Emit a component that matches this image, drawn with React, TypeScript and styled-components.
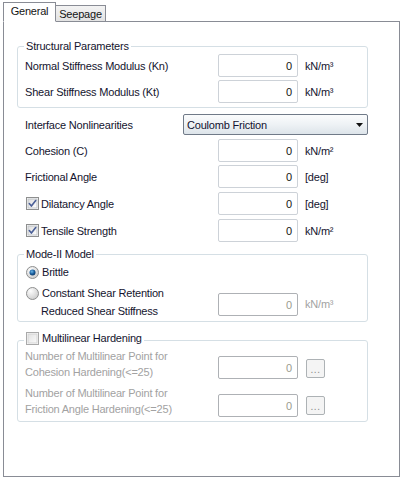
import React from "react";
import styled, { createGlobalStyle, css } from "styled-components";

const Global = createGlobalStyle`
  html, body { margin: 0; padding: 0; background: #ffffff; }
  body { font-family: "Liberation Sans", Arial, sans-serif; font-size: 11px; letter-spacing: -0.2px; color: #14142e; }
  * { box-sizing: border-box; }
`;

const Page = styled.div`
  width: 405px;
  height: 482px;
  padding: 2px 0 0 3px;
  display: flex;
  flex-direction: column;
`;

const TabStrip = styled.div`
  display: flex;
  align-items: flex-end;
  height: 20px;
  margin-bottom: -1px;
  position: relative;
  z-index: 1;
`;

const Tab = styled.div<{ $active?: boolean }>`
  display: flex;
  align-items: center;
  justify-content: center;
  border: 1px solid #898c95;
  color: #141414;
  ${(p) =>
    p.$active
      ? css`
          width: 53px;
          height: 20px;
          background: #ffffff;
          border-bottom: 1px solid #ffffff;
          position: relative;
          z-index: 2;
          padding-bottom: 2px;
        `
      : css`
          width: 51px;
          height: 17px;
          margin-left: -1px;
          background: linear-gradient(#f3f3f3, #e3e3e3);
          padding-top: 1px;
        `}
`;

const Panel = styled.div`
  width: 397px;
  height: 456px;
  border: 1px solid #898c95;
  background: #ffffff;
  padding: 24px 0 0 13px;
  display: flex;
  flex-direction: column;
`;

const Group = styled.div<{ $pad: string; $mt?: number }>`
  position: relative;
  width: 351px;
  border: 1px solid #d5dfe5;
  border-radius: 3px;
  padding: ${(p) => p.$pad};
  margin-top: ${(p) => p.$mt ?? 0}px;
  display: flex;
  flex-direction: column;
`;

const Legend = styled.div<{ $top?: number }>`
  position: absolute;
  top: ${(p) => p.$top ?? -8}px;
  left: 6px;
  line-height: 14px;
  padding: 0 2px;
  background: #ffffff;
  display: flex;
  align-items: center;
  gap: 2px;
`;

const Row = styled.div<{ $mt?: number; $pl?: number; $h?: number }>`
  display: flex;
  align-items: center;
  height: ${(p) => p.$h ?? 23}px;
  margin-top: ${(p) => p.$mt ?? 0}px;
  padding-left: ${(p) => p.$pl ?? 0}px;
`;

const Label = styled.div<{ $w?: number; $disabled?: boolean }>`
  width: ${(p) => p.$w ?? 193}px;
  flex: none;
  display: flex;
  align-items: center;
  gap: 2px;
  white-space: nowrap;
  color: ${(p) => (p.$disabled ? "#a2a2a2" : "#14142e")};
`;

const CheckSlot = styled.span`
  display: flex;
  margin-left: 1px;
`;

const Input = styled.div<{ $disabled?: boolean; $mt?: number }>`
  width: 80px;
  height: 23px;
  flex: none;
  margin-top: ${(p) => p.$mt ?? 0}px;
  border: 1px solid ${(p) => (p.$disabled ? "#aeb1b5" : "#cdd2d8")};
  border-radius: 2px;
  background: #ffffff;
  display: flex;
  align-items: center;
  justify-content: flex-end;
  padding-right: 5px;
  color: ${(p) => (p.$disabled ? "#9b9b8f" : "#141414")};
`;

const Unit = styled.div<{ $disabled?: boolean; $mt?: number }>`
  margin-left: 7px;
  margin-top: ${(p) => p.$mt ?? 0}px;
  color: ${(p) => (p.$disabled ? "#a2a2a2" : "#14142e")};
  white-space: nowrap;
`;

const Combo = styled.div`
  width: 185px;
  height: 21px;
  border: 1px solid #707a88;
  border-radius: 2px;
  background: linear-gradient(#fbfcfd 0%, #eef2f5 50%, #dde4ea 100%);
  display: flex;
  align-items: center;
  justify-content: space-between;
  padding: 0 4px 0 3px;
  color: #121230;
`;

const SubRow = styled.div<{ $mt?: number }>`
  display: flex;
  align-items: flex-start;
  margin-top: ${(p) => p.$mt ?? 0}px;
`;

const Column = styled.div<{ $w?: number }>`
  width: ${(p) => p.$w ?? 193}px;
  flex: none;
  display: flex;
  flex-direction: column;
`;

const OptionRow = styled.div<{ $mt?: number }>`
  display: flex;
  align-items: center;
  gap: 3px;
  height: 16px;
  margin-top: ${(p) => p.$mt ?? 0}px;
  margin-left: 1px;
  white-space: nowrap;
`;

const Indented = styled.div<{ $mt?: number }>`
  margin-left: 16px;
  margin-top: ${(p) => p.$mt ?? 0}px;
  line-height: 16px;
  white-space: nowrap;
`;

const Multiline = styled.div`
  width: 193px;
  flex: none;
  line-height: 16px;
  color: #a2a2a2;
`;

const DotsButton = styled.div<{ $mt?: number }>`
  width: 19px;
  height: 19px;
  margin-left: 8px;
  margin-top: ${(p) => p.$mt ?? 0}px;
  border: 1px solid #adb2b5;
  border-radius: 2px;
  background: #f4f4f4;
  color: #8a8a8a;
  display: flex;
  align-items: center;
  justify-content: center;
  font-size: 10px;
  padding-top: 2px;
  letter-spacing: 0.5px;
`;

const CheckBox = ({ checked, disabled }: { checked?: boolean; disabled?: boolean }) => {
  const id = `cb${checked ? 1 : 0}${disabled ? 1 : 0}`;
  return (
    <svg width="13" height="13" viewBox="0 0 13 13" style={{ flex: "none" }}>
      <defs>
        <linearGradient id={id} x1="0" y1="0" x2="1" y2="1">
          <stop offset="0" stopColor={disabled ? "#e2e2e2" : "#dcdcdc"} />
          <stop offset="1" stopColor={disabled ? "#fafafa" : "#ffffff"} />
        </linearGradient>
      </defs>
      <rect x="0.5" y="0.5" width="12" height="12" fill="#ffffff" stroke={disabled ? "#a9a9a9" : "#8e8f8f"} />
      <rect x="2" y="2" width="9" height="9" fill={`url(#${id})`} stroke={disabled ? "#d4d4d4" : "#c0c4c8"} strokeWidth="1" />
      {checked && (
        <path d="M3.3 6.6 L5.4 9.1 L9.7 3.5" fill="none" stroke="#4a5f97" strokeWidth="1.6" strokeLinecap="round" strokeLinejoin="round" />
      )}
    </svg>
  );
};

const Radio = ({ checked }: { checked?: boolean }) => (
  <svg width="13" height="13" viewBox="0 0 13 13" style={{ flex: "none" }}>
    <defs>
      <radialGradient id="rOff" cx="0.35" cy="0.3" r="0.8">
        <stop offset="0" stopColor="#fdfdfd" />
        <stop offset="1" stopColor="#c9c9c9" />
      </radialGradient>
      <radialGradient id="rOn" cx="0.4" cy="0.35" r="0.7">
        <stop offset="0" stopColor="#6fb8e8" />
        <stop offset="0.55" stopColor="#1a5f9e" />
        <stop offset="1" stopColor="#0c3563" />
      </radialGradient>
    </defs>
    <circle cx="6.5" cy="6.5" r="6" fill="url(#rOff)" stroke="#8e8f8f" strokeWidth="1" />
    {checked && <circle cx="6.5" cy="6.5" r="3" fill="url(#rOn)" />}
  </svg>
);

export default function App() {
  return (
    <>
      <Global />
      <Page>
        <TabStrip>
          <Tab $active>General</Tab>
          <Tab>Seepage</Tab>
        </TabStrip>
        <Panel>
          <Group $pad="7px 0 4px 7px">
            <Legend>Structural Parameters</Legend>
            <Row>
              <Label>Normal Stiffness Modulus (Kn)</Label>
              <Input>0</Input>
              <Unit>kN/m³</Unit>
            </Row>
            <Row $mt={3}>
              <Label>Shear Stiffness Modulus (Kt)</Label>
              <Input>0</Input>
              <Unit>kN/m³</Unit>
            </Row>
          </Group>

          <Row $mt={6} $pl={8} $h={21}>
            <Label $w={158}>Interface Nonlinearities</Label>
            <Combo>
              <span>Coulomb Friction</span>
              <svg width="7" height="4" viewBox="0 0 7 4">
                <path d="M0 0 H7 L3.5 4 Z" fill="#111111" />
              </svg>
            </Combo>
          </Row>
          <Row $mt={4} $pl={8}>
            <Label>Cohesion (C)</Label>
            <Input>0</Input>
            <Unit>kN/m²</Unit>
          </Row>
          <Row $mt={3} $pl={8}>
            <Label>Frictional Angle</Label>
            <Input>0</Input>
            <Unit>[deg]</Unit>
          </Row>
          <Row $mt={4} $pl={8}>
            <Label>
              <CheckSlot>
                <CheckBox checked />
              </CheckSlot>
              Dilatancy Angle
            </Label>
            <Input>0</Input>
            <Unit>[deg]</Unit>
          </Row>
          <Row $mt={4} $pl={8}>
            <Label>
              <CheckSlot>
                <CheckBox checked />
              </CheckSlot>
              Tensile Strength
            </Label>
            <Input>0</Input>
            <Unit>kN/m²</Unit>
          </Row>

          <Group $pad="9px 0 2px 7px" $mt={12}>
            <Legend>Mode-II Model</Legend>
            <OptionRow>
              <Radio checked />
              Brittle
            </OptionRow>
            <SubRow $mt={5}>
              <Column>
                <OptionRow>
                  <Radio />
                  Constant Shear Retention
                </OptionRow>
                <Indented $mt={2}>Reduced Shear Stiffness</Indented>
              </Column>
              <Input $disabled $mt={8}>0</Input>
              <Unit $disabled $mt={13}>kN/m³</Unit>
            </SubRow>
          </Group>

          <Group $pad="7px 0 4px 7px" $mt={18}>
            <Legend $top={-10}>
              <CheckBox disabled />
              <span style={{ marginLeft: 1 }}>Multilinear Hardening</span>
            </Legend>
            <SubRow>
              <Multiline>
                Number of Multilinear Point for
                <br />
                Cohesion Hardening(&lt;=25)
              </Multiline>
              <Input $disabled $mt={8}>0</Input>
              <DotsButton $mt={11}>...</DotsButton>
            </SubRow>
            <SubRow $mt={5}>
              <Multiline>
                Number of Multilinear Point for
                <br />
                Friction Angle Hardening(&lt;=25)
              </Multiline>
              <Input $disabled $mt={9}>0</Input>
              <DotsButton $mt={11}>...</DotsButton>
            </SubRow>
          </Group>
        </Panel>
      </Page>
    </>
  );
}
